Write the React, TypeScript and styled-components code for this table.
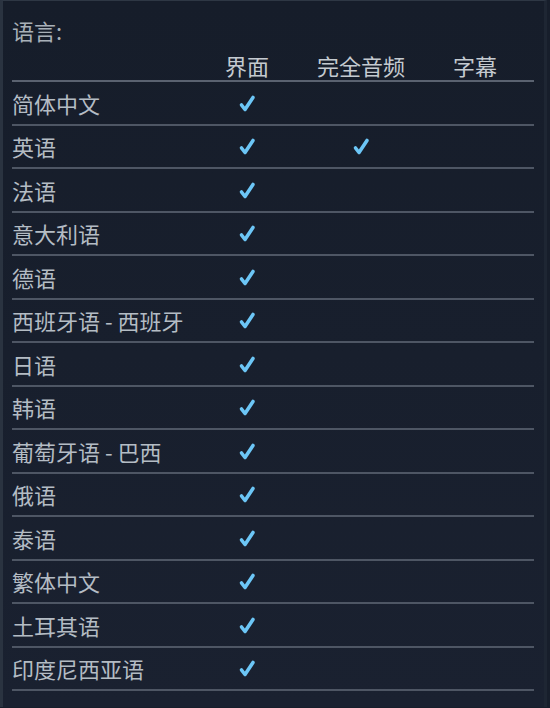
import React from 'react'
import styled, { createGlobalStyle } from 'styled-components'

const GlobalStyle = createGlobalStyle`
  html, body { margin: 0; padding: 0; background: #171e2b; }
  body { font-family: "Noto Sans CJK SC", "Noto Sans", sans-serif; }
`

interface Lang { name: string; ui: boolean; audio: boolean; subs: boolean }

const langs: Lang[] = [
  { name: '简体中文', ui: true, audio: false, subs: false },
  { name: '英语', ui: true, audio: true, subs: false },
  { name: '法语', ui: true, audio: false, subs: false },
  { name: '意大利语', ui: true, audio: false, subs: false },
  { name: '德语', ui: true, audio: false, subs: false },
  { name: '西班牙语 - 西班牙', ui: true, audio: false, subs: false },
  { name: '日语', ui: true, audio: false, subs: false },
  { name: '韩语', ui: true, audio: false, subs: false },
  { name: '葡萄牙语 - 巴西', ui: true, audio: false, subs: false },
  { name: '俄语', ui: true, audio: false, subs: false },
  { name: '泰语', ui: true, audio: false, subs: false },
  { name: '繁体中文', ui: true, audio: false, subs: false },
  { name: '土耳其语', ui: true, audio: false, subs: false },
  { name: '印度尼西亚语', ui: true, audio: false, subs: false },
]

const Check = () => (
  <svg width="20" height="20" viewBox="0 0 20 20">
    <path
      d="M4.5 11 L8 15.5 L16 3.5"
      fill="none"
      stroke="#6cc6f6"
      strokeWidth="3.6"
      strokeLinecap="round"
      strokeLinejoin="round"
    />
  </svg>
)

const App = () => {
  return <Panel>
    <GlobalStyle />
    <Title>语言:</Title>
    <Table>
      <HeadRow>
        <HeadCell />
        <HeadCell>界面</HeadCell>
        <HeadCell>完全音频</HeadCell>
        <HeadCell>字幕</HeadCell>
      </HeadRow>
      {langs.map((l) => (
        <Row key={l.name}>
          <NameCell>{l.name}</NameCell>
          <CheckCell>{l.ui && <Check />}</CheckCell>
          <CheckCell>{l.audio && <Check />}</CheckCell>
          <CheckCell>{l.subs && <Check />}</CheckCell>
        </Row>
      ))}
    </Table>
  </Panel>
}

export default App

const Panel = styled.div`
  width: 547px;
  height: 707px;
  box-sizing: border-box;
  border-left: 3px solid #2a3340;
  border-top: 1px solid #2e3744;
  border-right: 3px solid #1e2633;
  background: linear-gradient(180deg, #161d2a 0%, #1a2130 100%);
  padding: 15px 0 0 9px;
  color: #b4bcc4;
  font-size: 22px;
`

const Title = styled.div`
  height: 33px;
  line-height: 28px;
  color: #a8b0b8;
`

const Table = styled.div`
  width: 522px;
`

const HeadRow = styled.div`
  display: grid;
  grid-template-columns: 178px repeat(3, 114px);
  height: 31px;
  border-bottom: 2px solid #5a6270;
  align-items: center;
`

const HeadCell = styled.div`
  text-align: center;
  color: #c4cad0;
  line-height: 28px;
`

const Row = styled.div`
  display: grid;
  grid-template-columns: 178px repeat(3, 114px);
  height: 41.5px;
  border-bottom: 2px solid #4e5664;
  align-items: center;
`

const NameCell = styled.div`
  white-space: nowrap;
  line-height: 28px;
`

const CheckCell = styled.div`
  display: flex;
  justify-content: center;
  align-items: center;
  padding-top: 2px;
`
